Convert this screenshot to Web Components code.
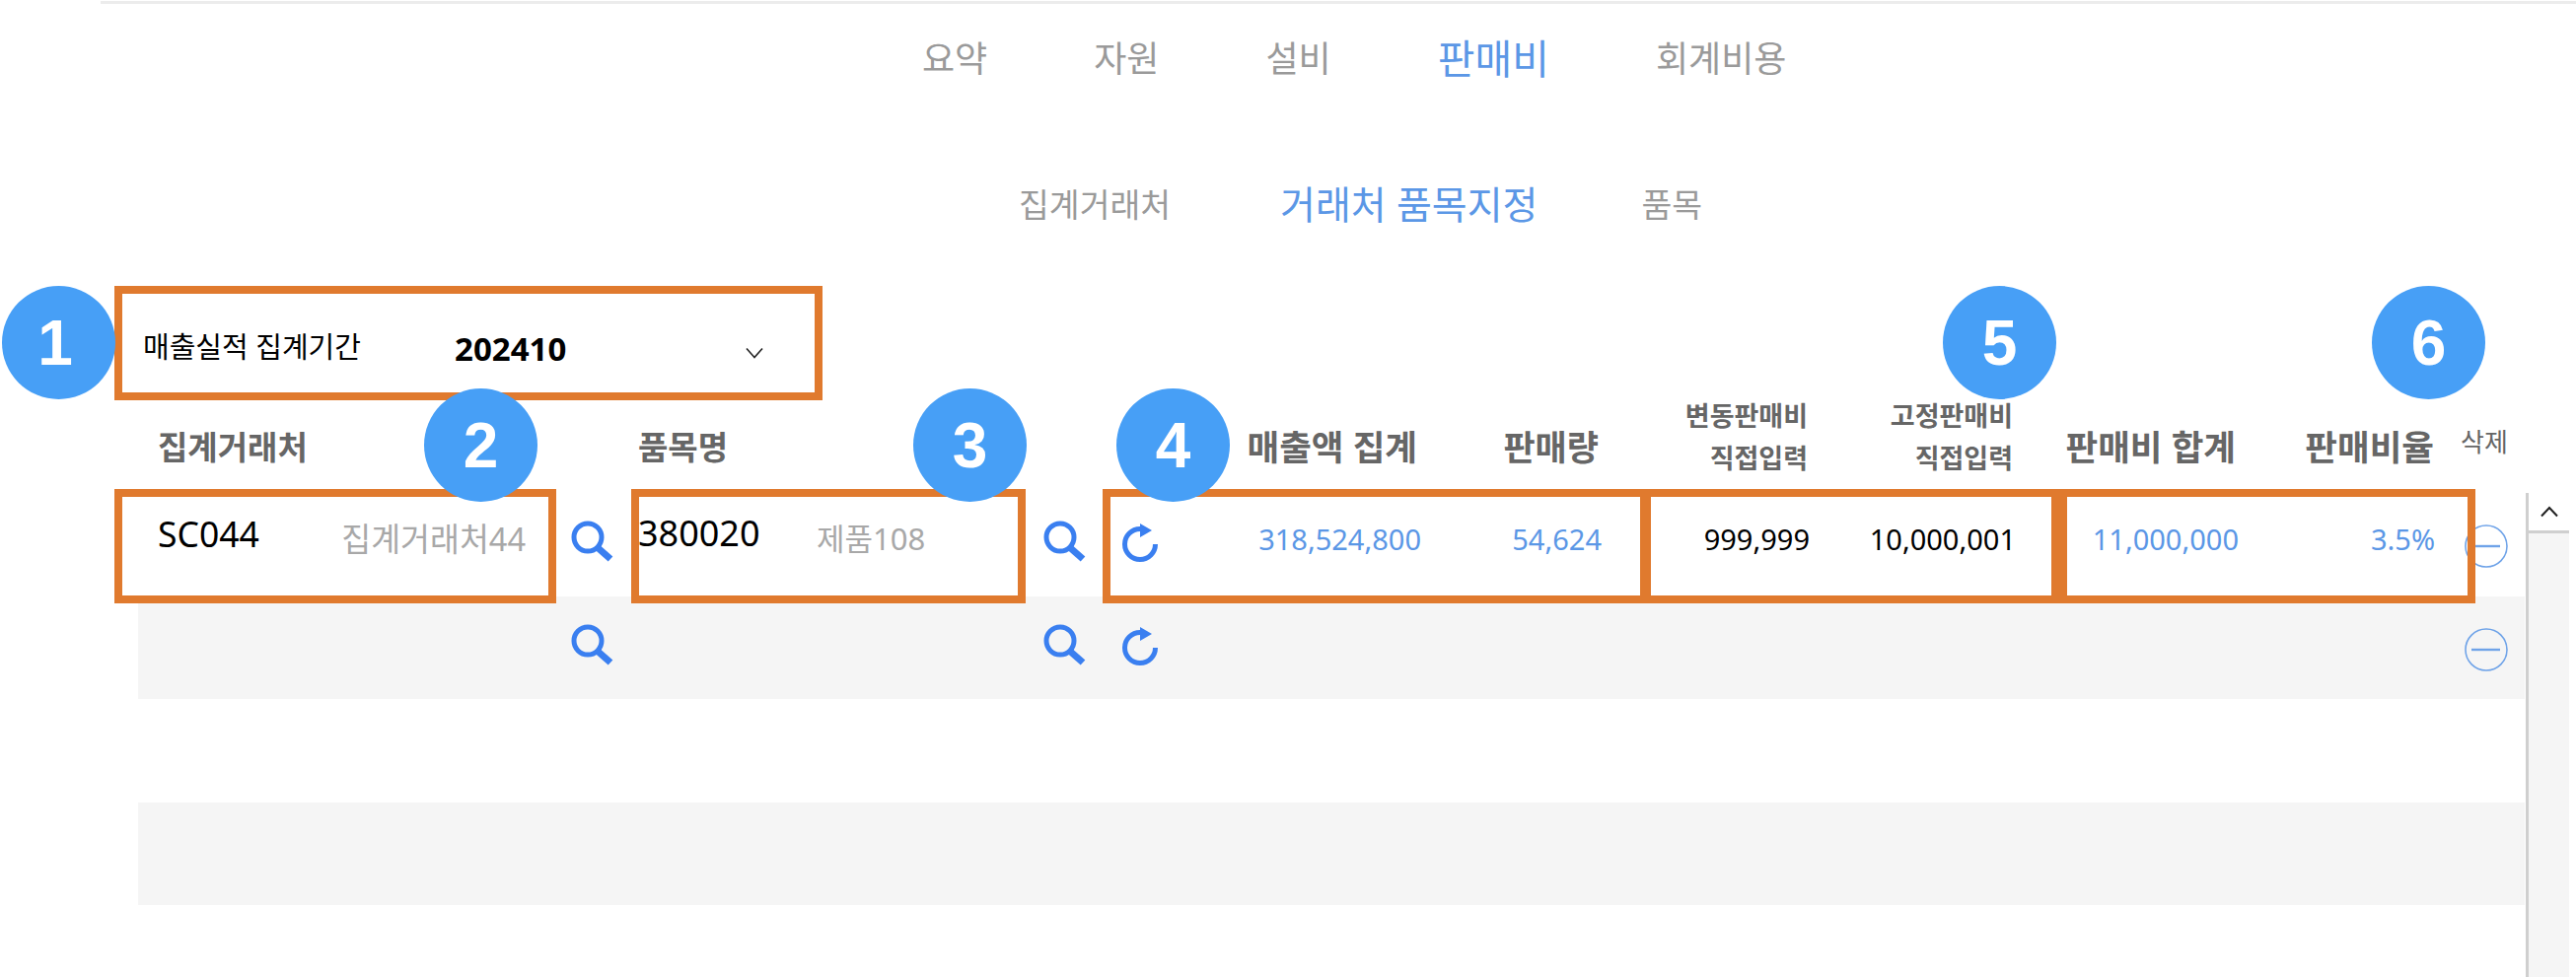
<!DOCTYPE html>
<html lang="ko">
<head>
<meta charset="utf-8">
<title>판매비</title>
<style>
  html, body { margin: 0; height: 992px; overflow: hidden; background: #fff; }
  body { font-family: "Noto Sans", "Noto Sans CJK KR", sans-serif; }
</style>
</head>
<body>
<sales-page>
  <nav-tabs slot="nav" style="--start:935px;--gap:108px;--size:36px;--h:112px">
    <tab-item>요약</tab-item>
    <tab-item>자원</tab-item>
    <tab-item>설비</tab-item>
    <tab-item active style="--tab-size:41px">판매비</tab-item>
    <tab-item>회계비용</tab-item>
  </nav-tabs>
  <nav-tabs slot="nav" style="--start:1033px;--gap:108px;--size:33.5px;--h:70px;--top:56px">
    <tab-item>집계거래처</tab-item>
    <tab-item active style="--tab-size:39px;margin:0 -3px 0 3px">거래처 품목지정</tab-item>
    <tab-item>품목</tab-item>
  </nav-tabs>
  <period-select slot="period" label="매출실적 집계기간" value="202410"></period-select>

  <cost-table slot="table">
    <grid-row slot="head" style="--row-h:100px">
      <t-cell kind="head left" style="--pl:20px;grid-column:1/3">집계거래처</t-cell>
      <t-cell></t-cell>
      <t-cell kind="head left" style="--pl:7px;grid-column:4/6">품목명</t-cell>
      <t-cell></t-cell>
      <t-cell></t-cell>
      <t-cell kind="head big" style="--pr:8px">매출액 집계</t-cell>
      <t-cell kind="head" style="--pr:6px">판매량</t-cell>
      <t-cell kind="head two" style="--pr:5px">변동판매비<br>직접입력</t-cell>
      <t-cell kind="head two" style="--pr:4px">고정판매비<br>직접입력</t-cell>
      <t-cell kind="head big" style="--pr:7px">판매비 합계</t-cell>
      <t-cell kind="head big" style="--pr:5px">판매비율</t-cell>
      <t-cell kind="del-head">삭제</t-cell>
    </grid-row>

    <grid-row>
      <t-cell kind="code" style="--pl:20px">SC044</t-cell>
      <t-cell kind="name" style="--pr:39px;justify-content:flex-end;font-size:32.5px">집계거래처44</t-cell>
      <t-cell kind="icon" style="--pl:6px"><search-icon></search-icon></t-cell>
      <t-cell kind="code" style="--pl:7px;font-size:36px">380020</t-cell>
      <t-cell kind="name" style="--pl:8px;font-size:31px">제품108</t-cell>
      <t-cell kind="icon" style="--pl:7px"><search-icon></search-icon></t-cell>
      <t-cell kind="icon" style="--pl:24px"><reload-icon></reload-icon></t-cell>
      <t-cell kind="num blue" style="--pr:4px">318,524,800</t-cell>
      <t-cell kind="num blue" style="--pr:3px">54,624</t-cell>
      <t-cell kind="num" style="--pr:3px">999,999</t-cell>
      <t-cell kind="num" style="--pr:1px">10,000,001</t-cell>
      <t-cell kind="num blue" style="--pr:4px">11,000,000</t-cell>
      <t-cell kind="num blue" style="--pr:4px">3.5%</t-cell>
      <t-cell kind="icon" style="--pl:25px"><minus-icon></minus-icon></t-cell>
    </grid-row>
    <grid-row shade>
      <t-cell></t-cell>
      <t-cell></t-cell>
      <t-cell kind="icon" style="--pl:6px"><search-icon></search-icon></t-cell>
      <t-cell></t-cell>
      <t-cell></t-cell>
      <t-cell kind="icon" style="--pl:7px"><search-icon></search-icon></t-cell>
      <t-cell kind="icon" style="--pl:24px"><reload-icon></reload-icon></t-cell>
      <t-cell></t-cell><t-cell></t-cell><t-cell></t-cell><t-cell></t-cell><t-cell></t-cell><t-cell></t-cell>
      <t-cell kind="icon" style="--pl:25px"><minus-icon></minus-icon></t-cell>
    </grid-row>
    <grid-row></grid-row>
    <grid-row shade></grid-row>
    <grid-row></grid-row>
  </cost-table>

  <!-- annotations lie on top of the screen -->
  <note-box slot="notes" style="left:116px;top:290px;width:718px;height:116px"></note-box>
  <note-box slot="notes" style="left:116px;top:496px;width:448px;height:116px"></note-box>
  <note-box slot="notes" style="left:640px;top:496px;width:400px;height:116px"></note-box>
  <note-box slot="notes" style="left:1118px;top:496px;width:553px;height:116px"></note-box>
  <note-box slot="notes" style="left:1666px;top:496px;width:422px;height:116px"></note-box>
  <note-box slot="notes" style="left:2088px;top:496px;width:422px;height:116px"></note-box>
  <note-badge slot="notes" style="left:2px;top:290px;padding-right:7px;box-sizing:border-box">1</note-badge>
  <note-badge slot="notes" style="left:430px;top:394px">2</note-badge>
  <note-badge slot="notes" style="left:926px;top:394px">3</note-badge>
  <note-badge slot="notes" style="left:1132px;top:394px">4</note-badge>
  <note-badge slot="notes" style="left:1970px;top:290px">5</note-badge>
  <note-badge slot="notes" style="left:2405px;top:290px">6</note-badge>
</sales-page>

<script>
// small helper so every element gets its open shadow root the same way
function define(name, html) {
  customElements.define(name, class extends HTMLElement {
    constructor() {
      super();
      this.attachShadow({ mode: 'open' }).innerHTML = html;
    }
  });
}

define('sales-page', `
  <style>
    :host { display: block; position: relative; width: 2612px; height: 992px; overflow: hidden; }
    .line { height: 3px; margin: 1px 0 0 102px; background: #ececec; }
    .period { display: block; margin-top: 48px; }
  </style>
  <div class="line"></div>
  <slot name="nav"></slot>
  <div class="period"><slot name="period"></slot></div>
  <slot name="table"></slot>
  <slot name="notes"></slot>
`);

define('nav-tabs', `
  <style>
    :host { display: flex; align-items: center; gap: var(--gap); padding-left: var(--start);
            height: var(--h); margin-top: var(--top, 0); font-size: var(--size); }
  </style>
  <slot></slot>
`);

define('tab-item', `
  <style>
    :host { display: block; color: #9a9a9a; line-height: 1.2; white-space: nowrap; font-size: var(--tab-size, inherit); }
    :host([active]) { color: #5b97e6; }
  </style>
  <slot></slot>
`);

customElements.define('period-select', class extends HTMLElement {
  constructor() {
    super();
    this.attachShadow({ mode: 'open' });
  }
  connectedCallback() {
    this.shadowRoot.innerHTML = `
      <style>
        :host { display: grid; grid-template-columns: 316px 294px 20px; align-items: center;
                height: 110px; padding-left: 145px; color: #000; }
        .label { font-size: 29px; margin-top: 10px; white-space: nowrap; }
        .value { font-size: 33px; font-weight: 700; margin-top: 17px; }
        svg { display: block; margin-top: 25px; }
      </style>
      <div class="label">${this.getAttribute('label')}</div>
      <div class="value">${this.getAttribute('value')}</div>
      <svg width="20" height="12" viewBox="0 0 20 12"><path d="M2 1.5L10 10.5L18 1.5" fill="none" stroke="#222" stroke-width="1.6"/></svg>
    `;
  }
});

define('cost-table', `
  <style>
    :host { display: grid; grid-template-columns: 2420px 44px; column-gap: 1px; margin-left: 140px;
            --cols: 200px 232px 68px 180px 230px 62px 148px 185px 182px 211px 207px 229px 199px 87px; }
    .bar { display: flex; flex-direction: column; height: 491px; border-left: 3px solid #cfcfcf; box-sizing: border-box; }
    .up { display: flex; align-items: center; justify-content: center; flex: 0 0 41px; box-sizing: border-box;
          border-bottom: 3px solid #cfcfcf; }
    .track { flex: 1; background: #f5f5f5; }
    .head { grid-column: 1 / -1; }
  </style>
  <div class="head"><slot name="head"></slot></div>
  <div><slot></slot></div>
  <div class="bar">
    <div class="up"><svg width="20" height="12" viewBox="0 0 20 12"><path d="M2 10.5L10 2L18 10.5" fill="none" stroke="#222" stroke-width="2"/></svg></div>
    <div class="track"></div>
  </div>
`);

define('grid-row', `
  <style>
    :host { display: grid; grid-template-columns: var(--cols); height: var(--row-h, 104.5px); }
    :host([shade]) { background: #f5f5f5; }
  </style>
  <slot></slot>
`);

define('t-cell', `
  <style>
    :host { display: flex; align-items: center; justify-content: flex-start; min-width: 0; white-space: nowrap;
            box-sizing: border-box; padding-left: var(--pl, 0); padding-right: var(--pr, 0); }
    :host([kind~="head"]) { color: #666; font-weight: 700; justify-content: flex-end; padding-top: 5px; font-size: 35px; line-height: 1; }
    :host([kind~="big"]) { font-size: 35.5px; }
    :host([kind~="left"]) { justify-content: flex-start; font-size: 33px; }
    :host([kind~="two"]) { font-size: 27px; line-height: 43px; text-align: right; padding-top: 0; padding-bottom: 16px; }
    :host([kind="del-head"]) { color: #666; font-size: 26px; padding: 0 0 8px 22px; }
    :host([kind="code"]) { color: #000; font-size: 35.5px; padding-bottom: 23px; }
    :host([kind="name"]) { color: #a8a8a8; font-size: 32px; padding-bottom: 15px; }
    :host([kind~="num"]) { color: #000; font-size: 29px; justify-content: flex-end; padding-bottom: 12px; }
    :host([kind~="blue"]) { color: #5b97e6; }
  </style>
  <slot></slot>
`);

define('search-icon', `
  <style>:host { display: block; width: 44px; height: 44px; margin-bottom: 4px; } svg { display: block; }</style>
  <svg width="44" height="44" viewBox="0 0 44 44" fill="none" stroke="#3a7ff0">
    <circle cx="18" cy="17" r="14" stroke-width="5"/>
    <path d="M28 27.5L41 39" stroke-width="7"/>
  </svg>
`);

define('reload-icon', `
  <style>:host { display: block; width: 40px; height: 44px; margin-bottom: 2px; } svg { display: block; }</style>
  <svg width="40" height="44" viewBox="0 0 40 44">
    <path d="M20 7.5A15.5 15.5 0 1 0 35.5 23" fill="none" stroke="#3a7ff0" stroke-width="5"/>
    <path d="M20 2L32 9L20 16Z" fill="#3a7ff0"/>
  </svg>
`);

define('minus-icon', `
  <style>:host { display: block; width: 46px; height: 46px; margin-top: 4px; } svg { display: block; }</style>
  <svg width="46" height="46" viewBox="0 0 46 46" fill="none" stroke="#6fa3e8">
    <circle cx="23" cy="23" r="21" stroke-width="1.6"/>
    <path d="M8 23H37" stroke-width="2.4"/>
  </svg>
`);

define('note-box', `
  <style>:host { display: block; position: absolute; box-sizing: border-box; border: 8px solid #e07a2e; }</style>
`);

define('note-badge', `
  <style>
    :host { display: flex; align-items: center; justify-content: center; position: absolute;
            width: 115px; height: 115px; border-radius: 50%; background: #479ff6; color: #fff;
            font: 700 64px "Liberation Sans", sans-serif; }
  </style>
  <slot></slot>
`);
</script>
</body>
</html>
